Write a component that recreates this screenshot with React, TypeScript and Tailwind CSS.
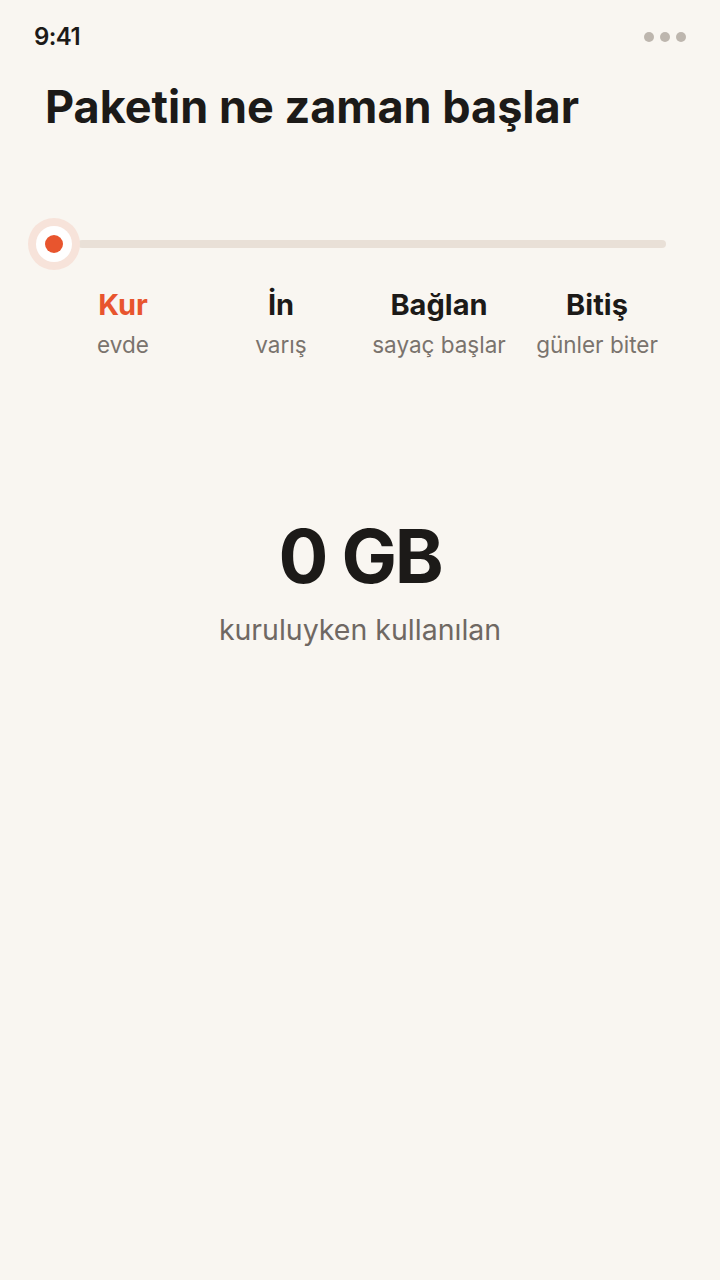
import React from 'react';

const steps = [
  { title: 'Kur', sub: 'evde', active: true },
  { title: 'İn', sub: 'varış', active: false },
  { title: 'Bağlan', sub: 'sayaç başlar', active: false },
  { title: 'Bitiş', sub: 'günler biter', active: false },
];

export default function App() {
  return (
    <div
      className="min-h-[1280px] w-[720px] bg-[#f9f6f1] text-[#1c1a18]"
      style={{ fontFamily: 'Inter, "Noto Sans", sans-serif' }}
    >
      {/* status bar */}
      <div className="flex h-[74px] items-center justify-between pl-[34px] pr-[34px]">
        <span className="text-[24px] font-semibold tracking-tight">9:41</span>
        <div className="flex gap-[6px]">
          <span className="h-[10px] w-[10px] rounded-full bg-[#bdb6ae]" />
          <span className="h-[10px] w-[10px] rounded-full bg-[#bdb6ae]" />
          <span className="h-[10px] w-[10px] rounded-full bg-[#bdb6ae]" />
        </div>
      </div>

      <h1 className="pl-[45px] text-[45px] font-bold leading-[66px]">
        Paketin ne zaman başlar
      </h1>

      {/* slider */}
      <div className="mt-[78px] flex items-center pl-[28px] pr-[54px]">
        <div className="relative z-10 flex h-[52px] w-[52px] items-center justify-center rounded-full bg-[#f7e3da]">
          <div className="flex h-[36px] w-[36px] items-center justify-center rounded-full bg-white">
            <div className="h-[18px] w-[18px] rounded-full bg-[#e8552e]" />
          </div>
        </div>
        <div className="-ml-[2px] h-[8px] flex-1 rounded-full bg-[#e9e0d7]" />
      </div>

      <div className="mt-[17px] grid grid-cols-4 px-[44px] text-center">
        {steps.map((s) => (
          <div key={s.title} className="flex flex-col items-center">
            <span
              className={`text-[29px] font-bold leading-[36px] ${
                s.active ? 'text-[#e8552e]' : 'text-[#1c1a18]'
              }`}
            >
              {s.title}
            </span>
            <span className="mt-[7px] text-[22.5px] leading-[30px] text-[#7a736d]">{s.sub}</span>
          </div>
        ))}
      </div>

      <div className="mt-[154px] flex flex-col items-center">
        <span className="text-[74px] font-bold leading-[84px] tracking-[-0.03em]">0 GB</span>
        <span className="mt-[13px] text-[28.5px] leading-[38px] text-[#6f6863]">
          kuruluyken kullanılan
        </span>
      </div>
    </div>
  );
}
